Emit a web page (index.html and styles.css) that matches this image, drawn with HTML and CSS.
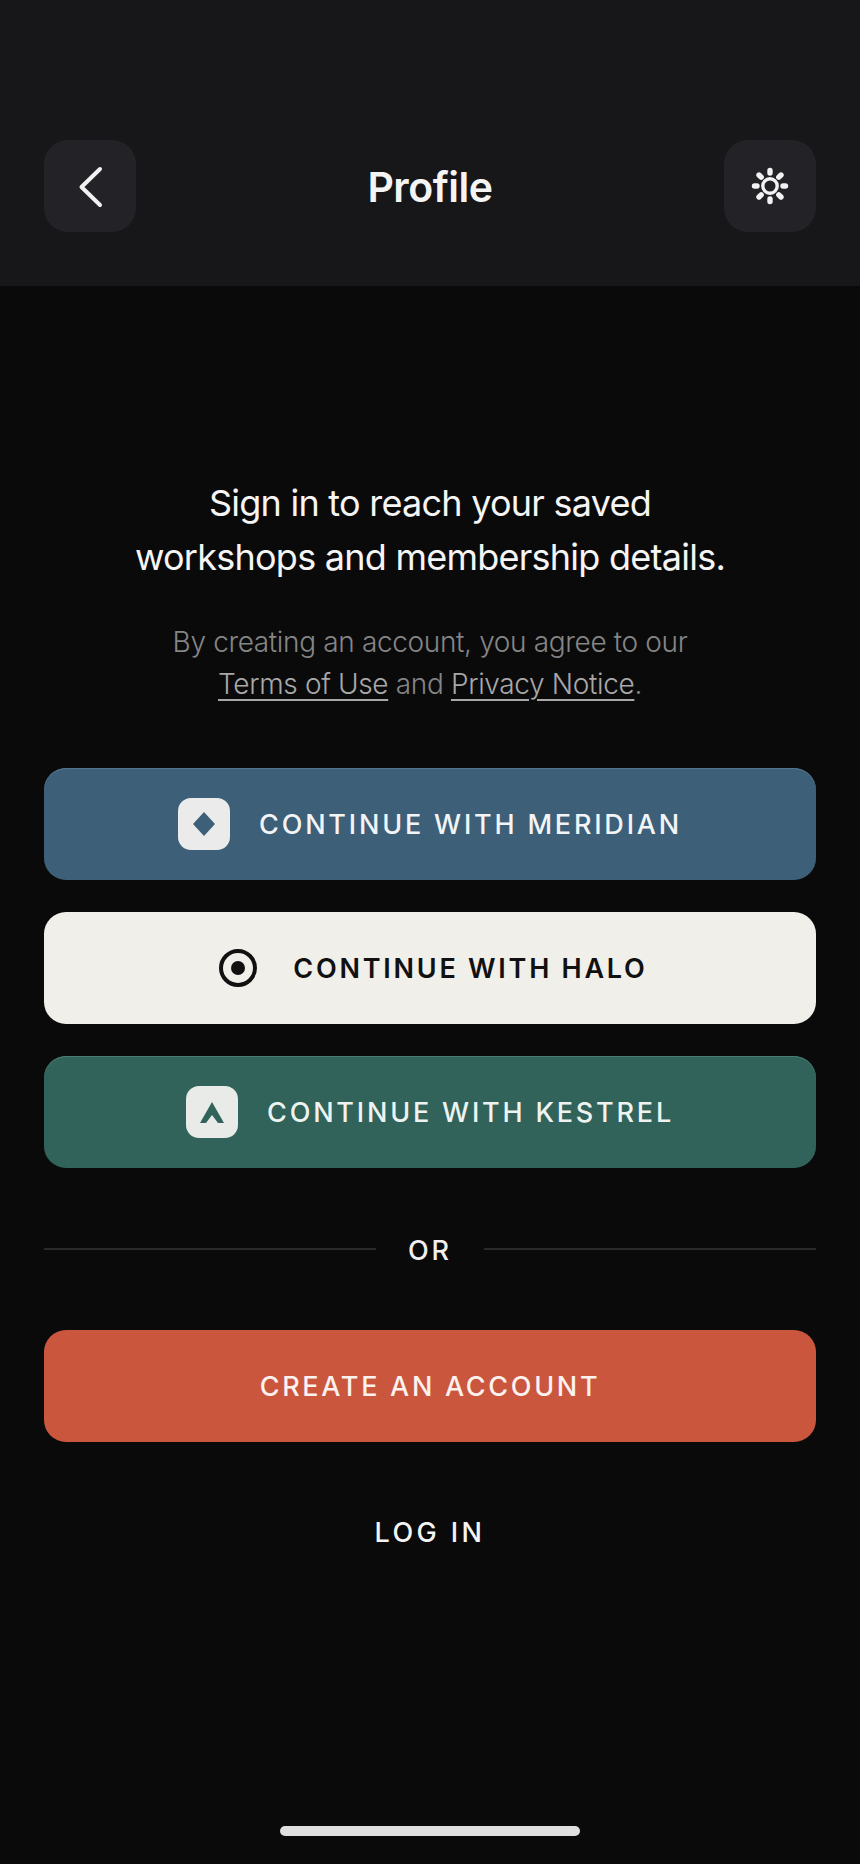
FILE: index.html
```html
<!DOCTYPE html>
<html lang="en">
<head>
<meta charset="utf-8">
<title>Profile</title>
<link rel="stylesheet" href="styles.css">
</head>
<body>
<div class="screen">
  <header class="topbar">
    <button class="icon-btn" aria-label="Back">
      <svg width="92" height="92" viewBox="0 0 92 92" fill="none"><path d="M56 29 L37.5 47 L56 65" stroke="#f2f2f2" stroke-width="4" stroke-linecap="round" stroke-linejoin="round"/></svg>
    </button>
    <h1 class="title">Profile</h1>
    <button class="icon-btn" aria-label="Theme">
      <svg width="92" height="92" viewBox="0 0 92 92" fill="none" stroke="#f2f2f2" stroke-linecap="round">
        <circle cx="46" cy="46" r="7.2" stroke-width="3.4"/>
        <path stroke-width="5.4" d="M46 30.5v2.5M46 59v2.5M30.5 46h2.5M59 46h2.5M35 35l2.2 2.2M54.8 54.8l2.2 2.2M35 57l2.2-2.2M54.8 37.2l2.2-2.2"/>
      </svg>
    </button>
  </header>
  <main class="content">
    <p class="lead">Sign in to reach your saved<br>workshops and membership details.</p>
    <p class="legal">By creating an account, you agree to our<br><a href="#">Terms of Use</a> and <a href="#">Privacy Notice</a>.</p>
    <div class="actions">
      <button class="btn btn-meridian">
        <span class="badge"><svg class="mark" width="22" height="24" viewBox="0 0 22 24"><path d="M11 0 L22 12 L11 24 L0 12 Z" fill="#3e5f78"/></svg></span>
        <span class="label">CONTINUE WITH MERIDIAN</span>
      </button>
      <button class="btn btn-halo">
        <span class="badge badge-clear"><svg class="mark" width="38" height="38" viewBox="0 0 38 38"><circle cx="19" cy="19" r="17" fill="none" stroke="#111" stroke-width="4"/><circle cx="19" cy="19" r="7" fill="#111"/></svg></span>
        <span class="label">CONTINUE WITH HALO</span>
      </button>
      <button class="btn btn-kestrel">
        <span class="badge badge-tint"><svg class="mark" width="24" height="21" viewBox="0 0 24 21"><path d="M12 0 L24 21 L18 21 L12 13 L6 21 L0 21 Z" fill="#31635a"/></svg></span>
        <span class="label">CONTINUE WITH KESTREL</span>
      </button>
    </div>
    <div class="divider"><span>OR</span></div>
    <button class="btn btn-create"><span class="label">CREATE AN ACCOUNT</span></button>
    <button class="login">LOG IN</button>
  </main>
  <div class="home-bar"></div>
</div>
</body>
</html>
```

FILE: styles.css
```css
* { box-sizing: border-box; }
html, body { margin: 0; padding: 0; background: #0a0a0b; }
body { font-family: Inter, "Liberation Sans", sans-serif; }
.screen { width: 860px; height: 1864px; display: flex; flex-direction: column; background: #0a0a0b; }
.topbar { height: 286px; flex: none; background: #17171a; padding: 140px 44px 54px; display: flex; align-items: center; justify-content: space-between; }
.icon-btn { width: 92px; height: 92px; padding: 0; border: 0; border-radius: 24px; background: #232327; display: block; }
.icon-btn svg { display: block; }
.title { margin: 2px 0 0; font-size: 41px; font-weight: 600; line-height: 46px; color: #f4f4f4; letter-spacing: -0.5px; }
.content { flex: 1; padding: 190px 44px 0; display: flex; flex-direction: column; }
.lead { margin: 0; text-align: center; font-size: 36px; line-height: 54px; font-weight: 400; color: #f5f5f5; letter-spacing: -0.75px; }
.legal { margin: 37px 0 0; text-align: center; font-size: 28px; line-height: 42px; font-weight: 300; color: #858585; letter-spacing: -0.35px; }
.legal a { color: #a8a8a8; text-decoration: underline; text-underline-offset: 5px; text-decoration-thickness: 2px; }
.actions { margin-top: 63px; display: flex; flex-direction: column; gap: 32px; }
.btn { width: 772px; height: 112px; border: 0; border-radius: 22px; padding: 0; display: flex; align-items: center; justify-content: center; gap: 29px; font: 500 27px/32px Inter, "Liberation Sans", sans-serif; letter-spacing: 2.8px; }
.label { padding-top: 2px; }
.btn-meridian { background: #3e5f78; color: #f2f4f6; box-shadow: inset 0 1px 0 #56758c; }
.btn-halo { background: #f0efea; color: #111; font-weight: 600; letter-spacing: 2.75px; }
.btn-kestrel { background: #31635a; color: #eef3f1; box-shadow: inset 0 1px 0 #4a7c72; }
.btn-create { background: #c9563d; color: #fbf1ee; letter-spacing: 2.7px; }
.badge { width: 52px; height: 52px; flex: none; border-radius: 13px; background: #ebebec; display: flex; align-items: center; justify-content: center; }
.badge-clear { background: transparent; }
.badge-tint { background: #e8ebe7; }
.mark { display: block; }
.divider { margin: 58px 0 58px; height: 46px; display: flex; align-items: center; gap: 32px; color: #f0f0f0; font-size: 27px; font-weight: 500; letter-spacing: 3px; }
.divider span { padding-top: 2px; }
.divider::before, .divider::after { content: ""; flex: 1; height: 2px; background: #2a2a2c; }
.login { margin: 75px auto 0; padding: 0; border: 0; background: none; color: #f5f5f5; font: 500 27px/32px Inter, "Liberation Sans", sans-serif; letter-spacing: 3.4px; }
.home-bar { flex: none; width: 300px; height: 10px; margin: 0 auto 28px; border-radius: 5px; background: #e0dfdf; }
```
